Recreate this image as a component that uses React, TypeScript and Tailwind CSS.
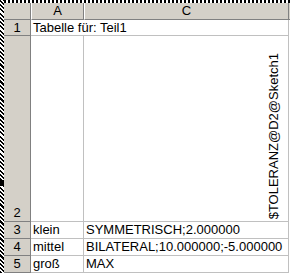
const rows = [
  { n: "3", a: "klein", c: "SYMMETRISCH;2.000000" },
  { n: "4", a: "mittel", c: "BILATERAL;10.000000;-5.000000" },
  { n: "5", a: "groß", c: "MAX" },
];

const hatch =
  "bg-[repeating-linear-gradient(45deg,#000_0px,#000_1.5px,#fff_1.5px,#fff_3px)]";

const App = () => {
  return (
    <div className="w-[290px] h-[273px] flex bg-white overflow-hidden text-[13px] leading-[16px] text-black font-['Liberation_Sans',Arial,sans-serif]">
      {/* left hatched frame */}
      <div className={`relative w-[4px] h-full shrink-0 ${hatch}`}>
        <div className="absolute left-0 top-[180px] w-[4px] h-[6px] bg-black" />
      </div>

      <div className="flex flex-col flex-1">
        {/* top hatched frame */}
        <div className="h-[3px] bg-[repeating-linear-gradient(90deg,#000_0px,#000_2px,#fff_2px,#fff_4px)]" />

        {/* column headers */}
        <div className="flex h-[17px] bg-[#d4d0c8]">
          <div className="w-[27px] border-r border-b border-[#808080]" />
          <div className="w-[53px] flex justify-center border-l border-l-white border-r border-b border-[#808080] border-l-white">
            A
          </div>
          <div className="w-[205px] flex justify-center border-l border-r border-b border-[#808080] border-l-white">
            C
          </div>
          <div className="flex-1 border-b border-[#808080]" />
        </div>

        {/* row 1 */}
        <div className="flex h-[16px]">
          <div className="w-[27px] flex justify-center bg-[#d4d0c8] border-r border-b border-[#808080]">
            1
          </div>
          <div className="w-[258px] pl-[2px] whitespace-nowrap border-r border-b border-[#c0c0c0]">
            Tabelle für: Teil1
          </div>
        </div>

        {/* row 2 */}
        <div className="flex h-[186px]">
          <div className="w-[27px] flex justify-center items-end bg-[#d4d0c8] border-r border-b border-[#808080]">
            2
          </div>
          <div className="w-[53px] border-r border-b border-[#c0c0c0]" />
          <div className="w-[205px] flex justify-end items-end pr-[6px] pb-[2px] border-r border-b border-[#c0c0c0]">
            <span className="[writing-mode:vertical-rl] rotate-180 whitespace-nowrap">
              $TOLERANZ@D2@Sketch1
            </span>
          </div>
        </div>

        {rows.map((r) => (
          <div key={r.n} className="flex h-[17px]">
            <div className="w-[27px] flex justify-center items-end bg-[#d4d0c8] border-r border-b border-[#808080]">
              {r.n}
            </div>
            <div className="w-[53px] pl-[2px] flex items-end whitespace-nowrap border-r border-b border-[#c0c0c0]">
              {r.a}
            </div>
            <div className="w-[205px] pl-[2px] flex items-end whitespace-nowrap border-r border-b border-[#c0c0c0]">
              {r.c}
            </div>
          </div>
        ))}
      </div>
    </div>
  );
};

export default App;
